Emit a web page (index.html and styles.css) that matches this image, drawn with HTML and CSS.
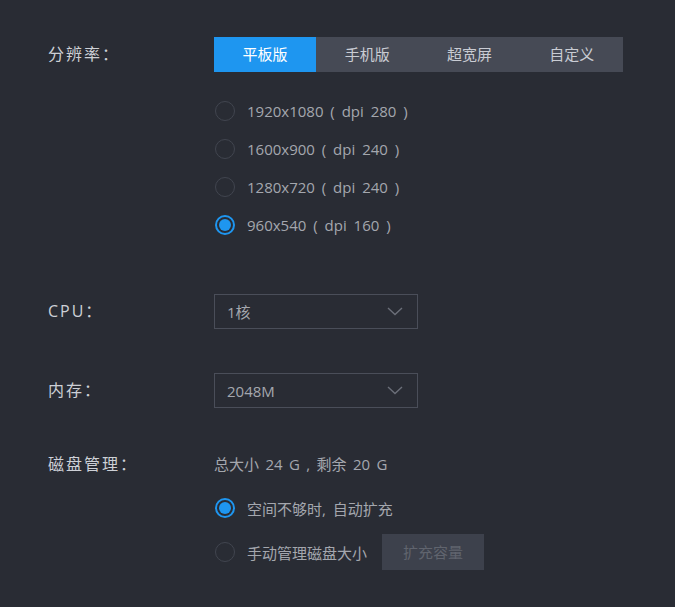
FILE: index.html
```html
<!DOCTYPE html>
<html lang="zh">
<head>
<meta charset="utf-8">
<link rel="stylesheet" href="styles.css">
</head>
<body>
<div class="page">
  <div class="row row-res">
    <div class="label">分辨率：</div>
    <div class="value">
      <div class="tabs">
        <div class="tab active">平板版</div>
        <div class="tab">手机版</div>
        <div class="tab">超宽屏</div>
        <div class="tab">自定义</div>
      </div>
      <div class="radios">
        <div class="radio-row"><span class="radio"></span><span class="rtext">1920x1080 ( dpi 280 )</span></div>
        <div class="radio-row"><span class="radio"></span><span class="rtext">1600x900 ( dpi 240 )</span></div>
        <div class="radio-row"><span class="radio"></span><span class="rtext">1280x720 ( dpi 240 )</span></div>
        <div class="radio-row"><span class="radio checked"></span><span class="rtext">960x540 ( dpi 160 )</span></div>
      </div>
    </div>
  </div>

  <div class="row row-cpu">
    <div class="label">CPU：</div>
    <div class="value">
      <div class="select"><span>1核</span>
        <svg class="chev" width="16" height="9" viewBox="0 0 16 9"><path d="M1 1 L8 7.5 L15 1" fill="none" stroke="#6b6f79" stroke-width="1.4"/></svg>
      </div>
    </div>
  </div>

  <div class="row row-mem">
    <div class="label">内存：</div>
    <div class="value">
      <div class="select"><span>2048M</span>
        <svg class="chev" width="16" height="9" viewBox="0 0 16 9"><path d="M1 1 L8 7.5 L15 1" fill="none" stroke="#6b6f79" stroke-width="1.4"/></svg>
      </div>
    </div>
  </div>

  <div class="row row-disk">
    <div class="label">磁盘管理：</div>
    <div class="value">
      <div class="disk-info">总大小 24 G , 剩余 20 G</div>
      <div class="radio-row disk-auto"><span class="radio checked"></span><span class="rtext">空间不够时, 自动扩充</span></div>
      <div class="radio-row disk-manual"><span class="radio"></span><span class="rtext">手动管理磁盘大小</span><span class="btn">扩充容量</span></div>
    </div>
  </div>
</div>
</body>
</html>
```
FILE: styles.css
```css
html, body {
  margin: 0;
  padding: 0;
  background: #292c34;
}
body {
  font-family: "Open Sans", "Noto Sans CJK SC", sans-serif;
  color: #cdd0d6;
  width: 675px;
  height: 607px;
  overflow: hidden;
}
.page {
  padding: 37px 0 0 48px;
}
.row {
  display: grid;
  grid-template-columns: 166px 1fr;
}
.label {
  font-size: 16px;
  line-height: 35px;
  color: #cdd0d6;
  letter-spacing: 2px;
}
.tabs {
  display: flex;
  width: 409px;
  height: 35px;
  background: #464a55;
}
.tab {
  flex: 1;
  text-align: center;
  line-height: 35px;
  font-size: 15px;
  color: #c9ccd3;
}
.tab.active {
  background: #1e96f0;
  color: #ffffff;
}
.radios {
  margin-top: 20px;
  display: flex;
  flex-direction: column;
}
.radio-row {
  display: flex;
  align-items: center;
  height: 38px;
}
.radio {
  box-sizing: border-box;
  width: 20px;
  height: 20px;
  border-radius: 50%;
  border: 1.5px solid #41454f;
  margin-left: 1px;
  flex: none;
  position: relative;
}
.radio.checked {
  border: 2px solid #1e96f0;
}
.radio.checked::after {
  content: "";
  position: absolute;
  left: 2px;
  top: 2px;
  width: 12px;
  height: 12px;
  border-radius: 50%;
  background: #1e96f0;
}
.rtext {
  margin-left: 12px;
  font-size: 15px;
  color: #a4a7ae;
  word-spacing: 3px;
}
.row-cpu {
  margin-top: 50px;
}
.row-mem {
  margin-top: 44px;
}
.select {
  box-sizing: border-box;
  width: 204px;
  height: 35px;
  border: 1px solid #4a4e59;
  display: flex;
  align-items: center;
  justify-content: space-between;
  padding: 0 14px 0 12px;
  font-size: 15px;
  color: #a4a7ae;
}
.chev {
  display: block;
}
.row-disk {
  margin-top: 42px;
}
.row-disk .label {
  line-height: 28px;
}
.disk-info {
  height: 28px;
  line-height: 28px;
  font-size: 15px;
  color: #a4a7ae;
  word-spacing: 2.5px;
}
.disk-auto {
  margin-top: 11px;
}
.disk-manual {
  margin-top: 6px;
}
.btn {
  margin-left: 15px;
  width: 102px;
  height: 36px;
  line-height: 36px;
  text-align: center;
  background: #3d414c;
  color: #60646e;
  font-size: 15px;
}
```
